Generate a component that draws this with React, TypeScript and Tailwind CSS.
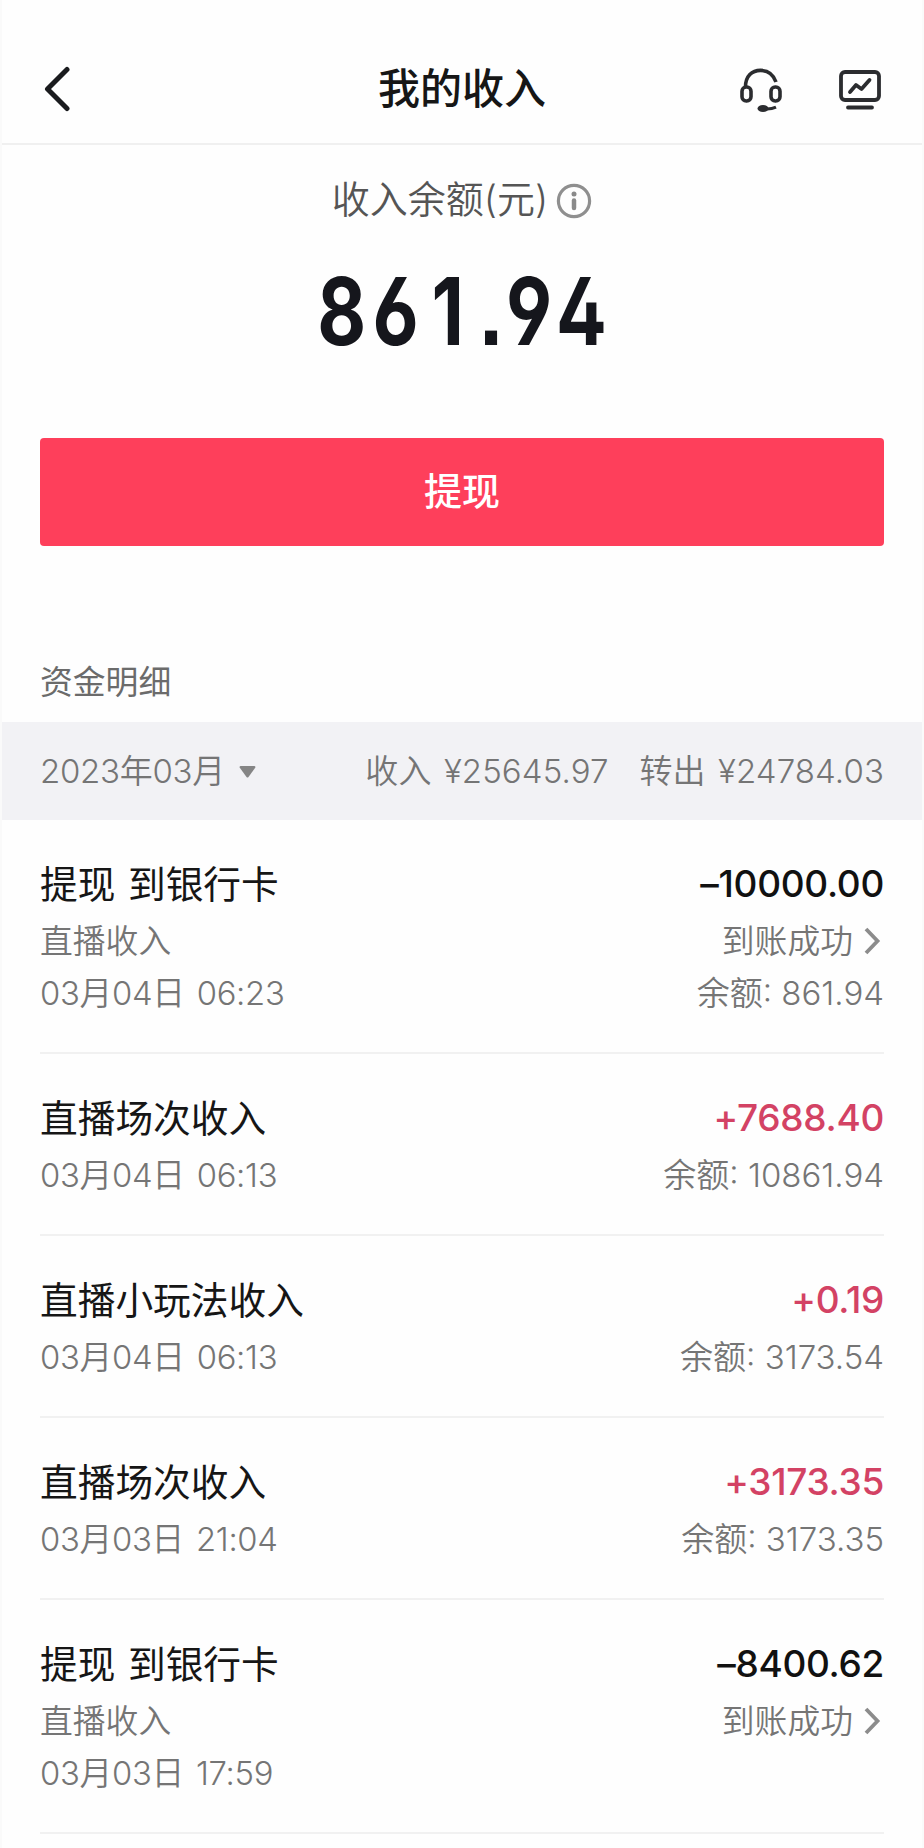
import { useState } from "react";

type Entry = {
  id: number;
  title: string;
  source?: string;
  time: string;
  amount: string;
  status?: string;
  balance?: string;
};

const entries: Entry[] = [
  {
    id: 1,
    title: "提现 到银行卡",
    source: "直播收入",
    time: "03月04日 06:23",
    amount: "–10000.00",
    status: "到账成功",
    balance: "861.94",
  },
  { id: 2, title: "直播场次收入", time: "03月04日 06:13", amount: "+7688.40", balance: "10861.94" },
  { id: 3, title: "直播小玩法收入", time: "03月04日 06:13", amount: "+0.19", balance: "3173.54" },
  { id: 4, title: "直播场次收入", time: "03月03日 21:04", amount: "+3173.35", balance: "3173.35" },
  {
    id: 5,
    title: "提现 到银行卡",
    source: "直播收入",
    time: "03月03日 17:59",
    amount: "–8400.62",
    status: "到账成功",
  },
];

function BackIcon() {
  return (
    <svg width="26" height="46" viewBox="0 0 26 46" fill="none" stroke="#1a1b1e" strokeWidth="5" strokeLinecap="round" strokeLinejoin="round">
      <path d="M23 3.500 3.500 23 23 42.500" />
    </svg>
  );
}

function HeadsetIcon() {
  return (
    <svg width="42" height="44" viewBox="0 0 42 44" fill="none" stroke="#2b2c2f" strokeWidth="3.6">
      <path d="M5.500 19C5.500 8 12 2.400 20.500 2.400c7.500 0 13 4.400 15.500 11.600" />
      <rect x="2" y="19" width="9" height="14" rx="4.200" />
      <rect x="31" y="19" width="9" height="14" rx="4.200" />
      <ellipse cx="23" cy="40.500" rx="5.500" ry="3.500" fill="#2b2c2f" stroke="none" />
      <path d="M25 41c5 .4 8-.4 11-1.800" strokeWidth="3" />
    </svg>
  );
}

function StatsIcon() {
  return (
    <svg width="42" height="40" viewBox="0 0 42 40" fill="none" stroke="#2b2c2f" strokeWidth="3.800" strokeLinecap="round" strokeLinejoin="round">
      <rect x="2" y="2" width="38" height="28" rx="4" />
      <path d="m11 22 6-7 5.500 4 8-9M9 37.500h24" />
    </svg>
  );
}

function InfoIcon() {
  return (
    <svg width="36" height="36" viewBox="0 0 36 36" fill="none">
      <circle cx="18" cy="18" r="15.600" stroke="#8f8f8f" strokeWidth="3.200" />
      <circle cx="18" cy="11" r="2.500" fill="#8a8a8a" />
      <path d="M18 17.500v7.500" stroke="#8a8a8a" strokeWidth="4.500" strokeLinecap="round" />
    </svg>
  );
}

function ChevronIcon() {
  return (
    <svg width="17" height="28" viewBox="0 0 17 28" fill="none" stroke="#8c8c8c" strokeWidth="3.800">
      <path d="M2 2l11.500 12L2 26" />
    </svg>
  );
}

function EntryRow({ entry }: { entry: Entry }) {
  const income = entry.amount.startsWith("+");

  return (
    <li className={`flex justify-between border-b-2 border-[#f1f1f1] pt-[35px] ${entry.source ? "h-[234px]" : "h-[182px]"}`}>
      <div>
        <h3 className="text-[37.7px] leading-[58px] font-normal text-[#161616] [word-spacing:2px]">{entry.title}</h3>
        {entry.source && (
          <p className="mt-px text-[32.8px] leading-[54px]">{entry.source}</p>
        )}
        <p className={`text-[32.8px] tracking-[-0.3px] [word-spacing:3px] ${entry.source ? "leading-[51px]" : "mt-px leading-[54px]"}`}>
          {entry.time}
        </p>
      </div>

      <div className="flex flex-col items-end">
        <span className={`text-[37px] leading-[58px] font-medium tracking-[-0.3px] ${income ? "text-[#d34264]" : "text-[#111]"}`}>
          {entry.amount}
        </span>
        {entry.status && (
          <button className="mt-px flex items-center gap-[11px] pr-[3px] text-[32.8px] leading-[54px]">
            {entry.status}
            <ChevronIcon />
          </button>
        )}
        {entry.balance && (
          <span className={`text-[33px] ${entry.status ? "leading-[51px]" : "mt-px leading-[54px]"}`}>
            余额: {entry.balance}
          </span>
        )}
      </div>
    </li>
  );
}

export default function App() {
  const [month] = useState("2023年03月");

  return (
    <div
      lang="zh-CN"
      className="h-[1848px] overflow-hidden border-x-2 border-[#fafafa] bg-[#fefefe] font-['Inter','Noto_Sans_CJK_SC',sans-serif] font-[350] text-[#757575]"
    >
      {/* Header */}
      <header className="grid h-[145px] grid-cols-3 items-center border-b-2 border-[#f0f0f0] px-10 pt-[35px]">
        <button className="justify-self-start pl-0.5">
          <BackIcon />
        </button>
        <h1 className="text-center text-[42px] leading-[60px] font-medium text-[#161616]">我的收入</h1>
        <div className="flex items-center justify-end gap-[57px] pt-0.5 pr-px">
          <HeadsetIcon />
          <StatsIcon />
        </div>
      </header>

      {/* Balance */}
      <section className="flex flex-col items-center px-[38px]">
        <div className="mt-[26px] flex items-center gap-2 text-[38px] leading-[56px] text-[#555]">
          收入余额(元)
          <span className="pt-1">
            <InfoIcon />
          </span>
        </div>
        <div className="mt-[29px] scale-x-[0.8] pl-2 text-[94px] leading-[110px] font-[680] tracking-[8px] text-[#15161c] [font-feature-settings:'cv02','cv03','cv04','ss07']">
          86<span className="mr-2.5 ml-2">1</span>.94
        </div>
        <button className="mt-[72px] h-[108px] w-full rounded bg-[#fe3f5b] pb-0.5 text-[38px] leading-[50px] font-medium text-white">
          提现
        </button>
      </section>

      {/* Monthly summary */}
      <h2 className="mt-28 px-[38px] text-[32.8px] leading-[48px] font-normal text-[#6b6b6b]">资金明细</h2>
      <div className="mt-4 flex h-[98px] items-center justify-between bg-[#f2f2f5] px-[38px] pt-0.5 text-[33px]">
        <button className="flex items-center gap-[14px] tracking-[-0.3px]">
          {month}
          <svg width="17" height="12" viewBox="0 0 17 12" fill="#858585">
            <path d="M1.500 0h14q1.500.5.7 1.700L9.500 11q-1 1.200-2 0L.8 1.700Q0 .5 1.500 0Z" />
          </svg>
        </button>
        <div className="flex gap-[31px] tracking-[0.1px] [word-spacing:3px]">
          <span>收入 ¥25645.97</span>
          <span>转出 ¥24784.03</span>
        </div>
      </div>

      {/* Entries */}
      <ul className="px-[38px]">
        {entries.map((entry) => (
          <EntryRow key={entry.id} entry={entry} />
        ))}
      </ul>
    </div>
  );
}
